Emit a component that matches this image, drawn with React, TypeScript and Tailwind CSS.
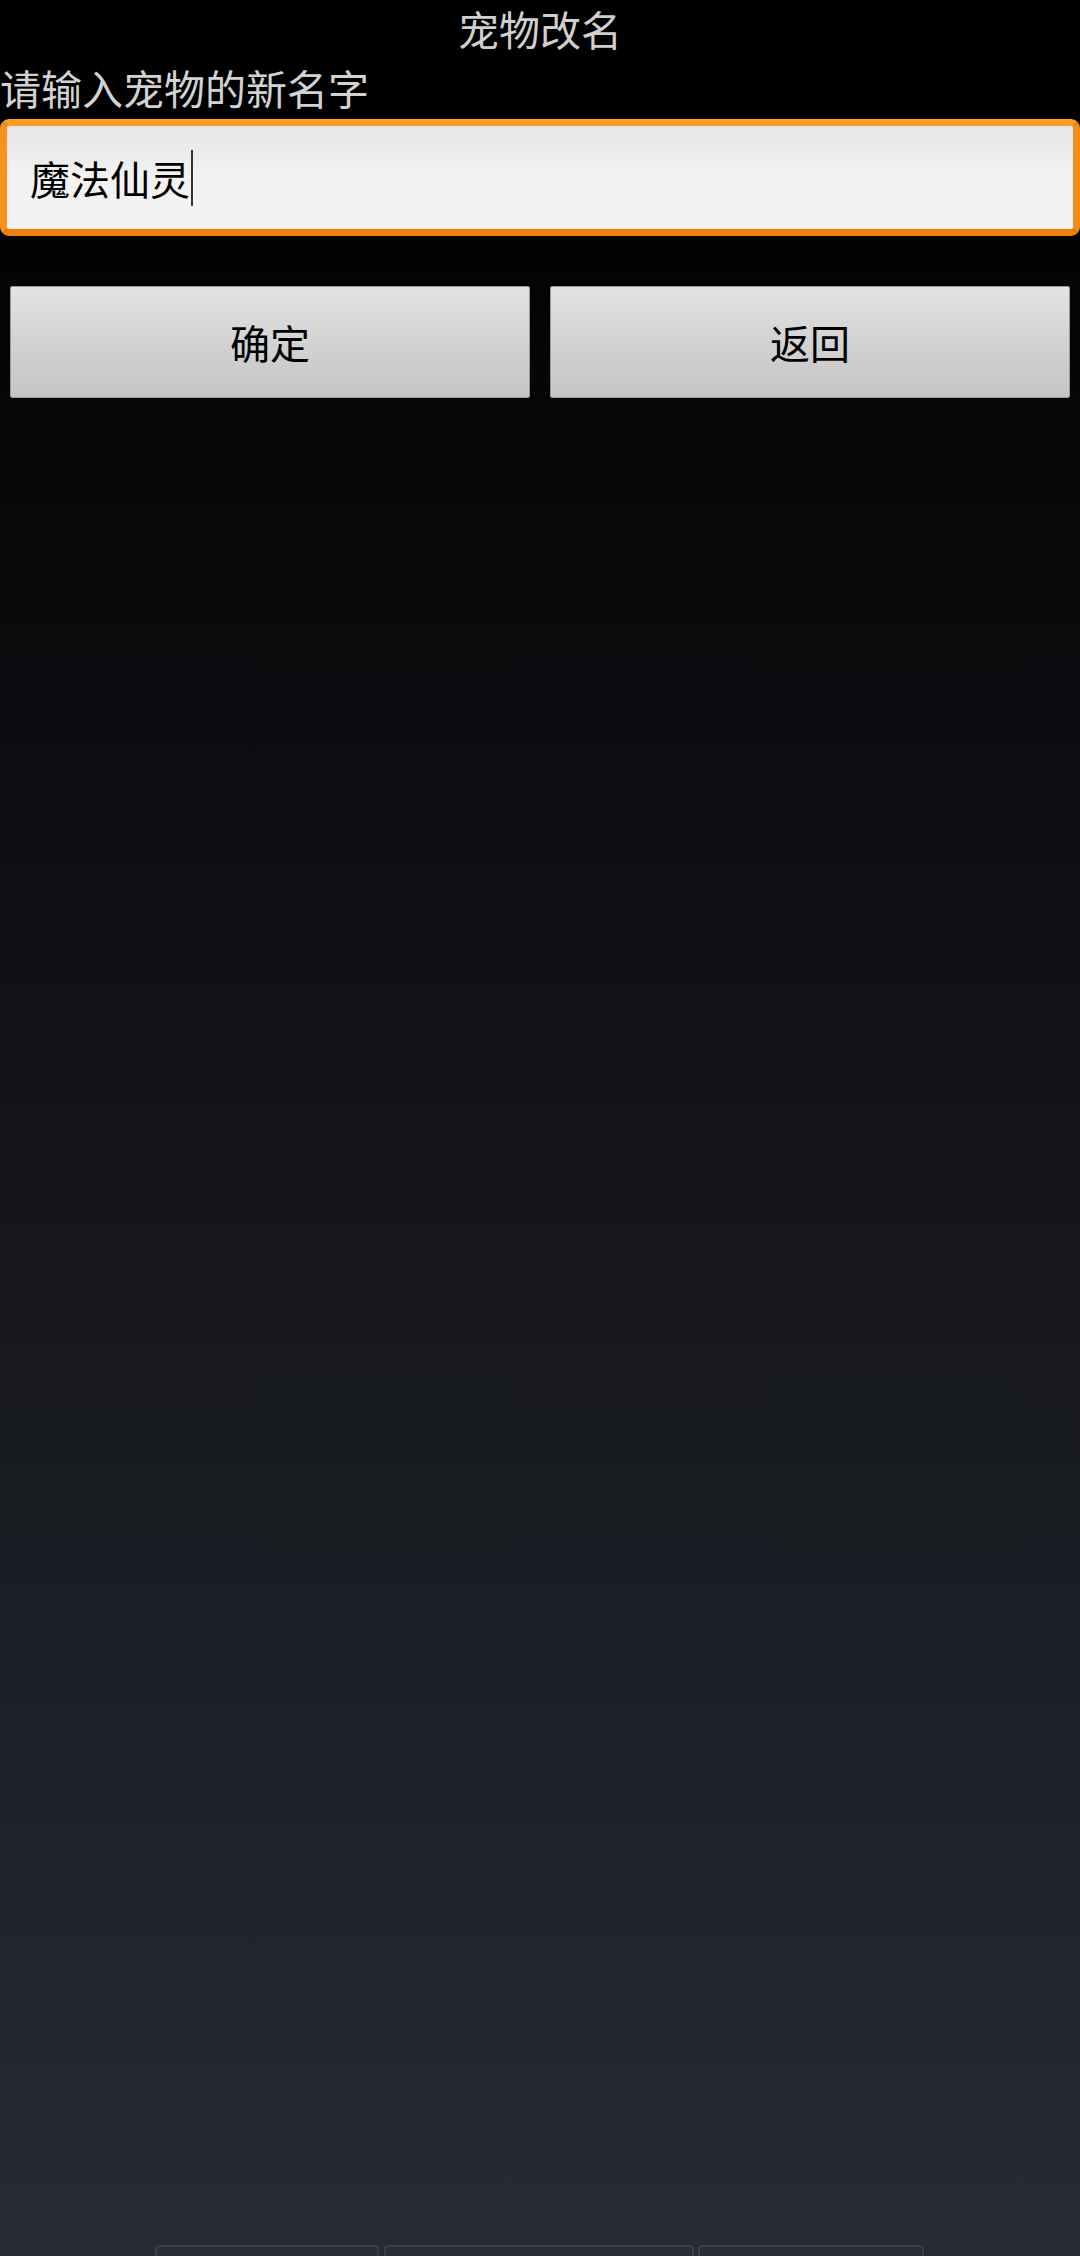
export default function App() {
  return (
    <div className="flex h-[2256px] w-full flex-col bg-[linear-gradient(to_bottom,#000_4%,#272b34)] font-['Noto_Sans_CJK_SC','Noto_Sans',sans-serif]">
      {/* Title */}
      <div className="flex h-[56px] items-center justify-center text-[41px] leading-none text-[#cfcfcf]">
        宠物改名
      </div>

      {/* Label */}
      <div className="flex h-[63px] items-center text-[41px] leading-none text-[#d2d2d2]">
        请输入宠物的新名字
      </div>

      {/* Input */}
      <div className="h-[117px] rounded-[9px] border-[7px] border-t-[#f99b2a] border-r-[#f48c1a] border-b-[#ef7f0e] border-l-[#f69220] bg-gradient-to-b from-[#e6e6e6] via-[#f2f2f2] to-[#f2f2f2]">
        <div className="flex h-full items-center pl-[23px]">
          <span className="text-[40px] leading-none text-black">魔法仙灵</span>
          <span className="ml-[1px] h-[56px] w-[2px] bg-[#333]" />
        </div>
      </div>

      {/* Buttons */}
      <div className="mt-[50px] grid grid-cols-2 gap-[20px] px-[10px]">
        <button className="flex h-[112px] items-center justify-center rounded-[2px] border border-[#9a9a9a] bg-gradient-to-b from-[#e2e2e2] to-[#c4c4c4] text-[40px] leading-none text-black">
          确定
        </button>
        <button className="flex h-[112px] items-center justify-center rounded-[2px] border border-[#9a9a9a] bg-gradient-to-b from-[#e2e2e2] to-[#c4c4c4] text-[40px] leading-none text-black">
          返回
        </button>
      </div>

      <div className="flex-1" />

      {/* Bottom partial tabs */}
      <div className="flex h-[11px] items-start overflow-hidden pl-[155px]">
        <div className="h-[16px] w-[224px] rounded-[4px] border-2 border-[#3a3e47] bg-[#2a2e37]" />
        <div className="ml-[5px] h-[16px] w-[310px] rounded-[4px] border-2 border-[#3a3e47] bg-[#2a2e37]" />
        <div className="ml-[4px] h-[16px] w-[226px] rounded-[4px] border-2 border-[#3a3e47] bg-[#2a2e37]" />
      </div>
    </div>
  );
}
